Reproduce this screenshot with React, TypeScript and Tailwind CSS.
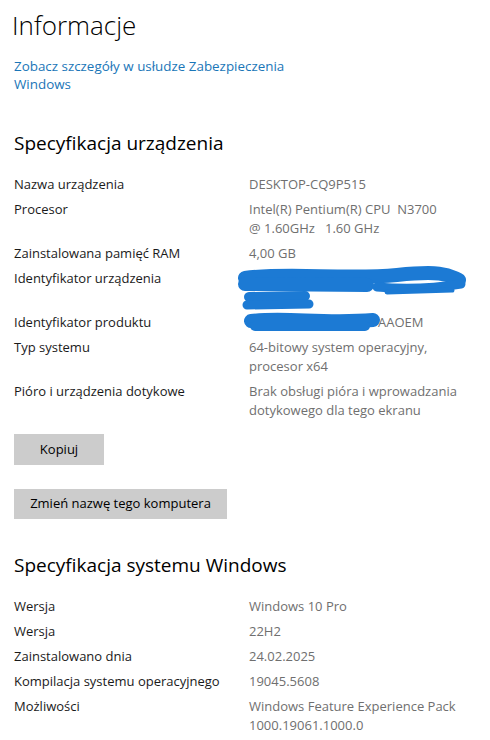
import React from "react"

const font = { fontFamily: '"Open Sans", "Noto Sans", sans-serif' }

const deviceSpecs: { label: string; value: React.ReactNode }[] = [
  { label: "Nazwa urządzenia", value: "DESKTOP-CQ9P515" },
  { label: "Procesor", value: <>Intel(R) Pentium(R) CPU&nbsp; N3700<br />@ 1.60GHz&nbsp;&nbsp; 1.60 GHz</> },
  { label: "Zainstalowana pamięć RAM", value: "4,00 GB" },
  { label: "Identyfikator urządzenia", value: <DeviceIdScribble /> },
  { label: "Identyfikator produktu", value: <ProductIdValue /> },
  { label: "Typ systemu", value: <>64-bitowy system operacyjny,<br />procesor x64</> },
  { label: "Pióro i urządzenia dotykowe", value: <>Brak obsługi pióra i wprowadzania<br />dotykowego dla tego ekranu</> },
]

const windowsSpecs: { label: string; value: React.ReactNode }[] = [
  { label: "Wersja", value: "Windows 10 Pro" },
  { label: "Wersja", value: "22H2" },
  { label: "Zainstalowano dnia", value: "24.02.2025" },
  { label: "Kompilacja systemu operacyjnego", value: "19045.5608" },
  { label: "Możliwości", value: <>Windows Feature Experience Pack<br />1000.19061.1000.0</> },
]

// blue marker scribble over the redacted device id
function DeviceIdScribble() {
  return (
    <div className="relative h-[38px]">
      <svg className="absolute -left-3 -top-[1px] overflow-visible" width="232" height="46" viewBox="0 0 232 46">
        <g fill="none" stroke="#1c7ad4" strokeLinecap="round" strokeLinejoin="round">
          <path d="M8 10 C50 4 110 12 160 7 S212 8 222 12" strokeWidth="14" />
          <path d="M8 16 L130 17" strokeWidth="14" />
          <path d="M140 19 C175 22 205 19 224 16" strokeWidth="9" />
          <path d="M150 24 L215 22" strokeWidth="5" />
          <path d="M12 29 L68 28" strokeWidth="10" />
          <path d="M10 37 L72 36" strokeWidth="9" />
        </g>
      </svg>
    </div>
  )
}

function ProductIdValue() {
  return (
    <div className="flex items-center">
      <svg className="-ml-1 overflow-visible" width="133" height="19" viewBox="0 0 133 19">
        <g fill="none" stroke="#1c7ad4" strokeLinecap="round">
          <path d="M6 8 C40 4 80 11 128 7" strokeWidth="14" />
          <path d="M10 13 L120 13" strokeWidth="10" />
        </g>
      </svg>
      <span>AAOEM</span>
    </div>
  )
}

function SpecTable({ rows }: { rows: { label: string; value: React.ReactNode }[] }) {
  return (
    <div className="flex flex-col gap-[6px]">
      {rows.map((row, i) => (
        <div key={i} className="flex text-[13px] leading-[19px]">
          <div className="w-[235px] shrink-0 text-[#1a1a1a]">{row.label}</div>
          <div className="flex-1 text-[#6f6f6f]">{row.value}</div>
        </div>
      ))}
    </div>
  )
}

export default function App() {
  return (
    <div className="min-h-[740px] w-[490px] bg-white px-[14px] pt-[7px]" style={font}>
      <h1 className="-ml-[2px] text-[26px] font-light leading-[36px] text-black">Informacje</h1>

      <a className="mt-[14px] block w-[300px] text-[13.4px] leading-[18px] text-[#1a76b8]">
        Zobacz szczegóły w usłudze Zabezpieczenia Windows
      </a>

      <h2 className="mt-[37px] text-[19px] leading-[26px] text-black">Specyfikacja urządzenia</h2>

      <div className="mt-[19px]">
        <SpecTable rows={deviceSpecs} />
      </div>

      <div className="mt-[14px] flex flex-col items-start gap-[24px]">
        <button className="h-[31px] w-[90px] bg-[#cccccc] text-[13px] text-black">Kopiuj</button>
        <button className="h-[30px] w-[213px] bg-[#cccccc] text-[13px] text-black">Zmień nazwę tego komputera</button>
      </div>

      <h2 className="mt-[33px] text-[19px] leading-[26px] text-black">Specyfikacja systemu Windows</h2>

      <div className="mt-[19px]">
        <SpecTable rows={windowsSpecs} />
      </div>
    </div>
  )
}
